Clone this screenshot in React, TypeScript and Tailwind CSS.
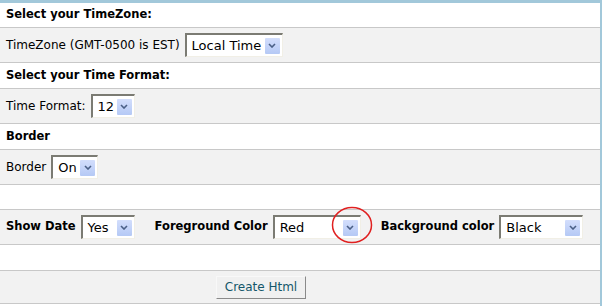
import React from "react";

type SelectProps = {
   value: string;
   width: string;
};

const Chevron = () => (
   <svg width="8" height="5" viewBox="0 0 8 5" className="block">
      <path d="M1 1 L4 4 L7 1" fill="none" stroke="#4a5f86" strokeWidth="1.6" />
   </svg>
);

const FakeSelect = ({ value, width }: SelectProps) => (
   <div
      className={`flex h-[24px] ${width} items-center border-t-2 border-l-2 border-r border-b border-t-[#7b7b73] border-l-[#7b7b73] border-r-[#f1efe6] border-b-[#f1efe6] bg-white pl-[5px] pr-[2px] text-[13px] font-normal`}
   >
      <span className="flex-1 leading-none">{value}</span>
      <span className="flex h-[16px] w-[15px] items-center justify-center rounded-[1px] bg-gradient-to-b from-[#d3defc] to-[#b5c9f5]">
         <Chevron />
      </span>
   </div>
);

const HeadRow = ({ text, h }: { text: string; h: string }) => (
   <div className={`flex ${h} items-center border-b border-[#c8c8c8] bg-white pl-[6px] text-[11.5px] font-bold`}>
      {text}
   </div>
);

const App = () => {
   return (
      <div
         className="relative h-[306px] w-[602px] overflow-hidden border-t-[3px] border-r-2 border-[#a2c8da] bg-white text-[12px] text-black"
         style={{ fontFamily: '"DejaVu Sans", Verdana, sans-serif' }}
      >
         <HeadRow text="Select your TimeZone:" h="h-[25px]" />
         <div className="flex h-[35px] items-center gap-[5px] border-b border-[#c8c8c8] bg-[#f2f2f2] pl-[6px]">
            <span>TimeZone (GMT-0500 is EST)</span>
            <FakeSelect value="Local Time" width="w-[98px]" />
         </div>
         <HeadRow text="Select your Time Format:" h="h-[26px]" />
         <div className="flex h-[35px] items-center gap-[5px] border-b border-[#c8c8c8] bg-[#f2f2f2] pl-[6px]">
            <span>Time Format:</span>
            <FakeSelect value="12" width="w-[44px]" />
         </div>
         <HeadRow text="Border" h="h-[26px]" />
         <div className="flex h-[35px] items-center gap-[5px] border-b border-[#c8c8c8] bg-[#f2f2f2] pl-[6px]">
            <span>Border</span>
            <FakeSelect value="On" width="w-[47px]" />
         </div>
         <div className="h-[25px] border-b border-[#c8c8c8] bg-white" />
         <div className="flex h-[35px] items-center border-b border-[#c8c8c8] bg-[#f2f2f2] pl-[6px] text-[11.5px] font-bold">
            <span>Show Date</span>
            <div className="ml-[5px]">
               <FakeSelect value="Yes" width="w-[54px]" />
            </div>
            <span className="ml-[20px]">Foreground Color</span>
            <div className="ml-[5px]">
               <FakeSelect value="Red" width="w-[88px]" />
            </div>
            <span className="ml-[20px]">Background color</span>
            <div className="ml-[5px]">
               <FakeSelect value="Black" width="w-[84px]" />
            </div>
         </div>
         <div className="h-[26px] border-b border-[#c8c8c8] bg-white" />
         <div className="flex h-[33px] items-center justify-center border-b border-[#c8c8c8] bg-[#f2f2f2] pr-[78px]">
            <button
               type="button"
               className="h-[23px] w-[90px] border border-t-[#f8f8f8] border-l-[#f8f8f8] border-r-[#8a8a8a] border-b-[#8a8a8a] bg-[#f0f0f0] text-[12px] text-[#14566a]"
            >
               Create Html
            </button>
         </div>
         <svg
            className="pointer-events-none absolute left-[331px] top-[203px]"
            width="42"
            height="38"
            viewBox="0 0 42 38"
         >
            <ellipse cx="21" cy="19" rx="19.5" ry="17.5" fill="none" stroke="#e02020" strokeWidth="1.5" />
         </svg>
      </div>
   );
};

export default App;
